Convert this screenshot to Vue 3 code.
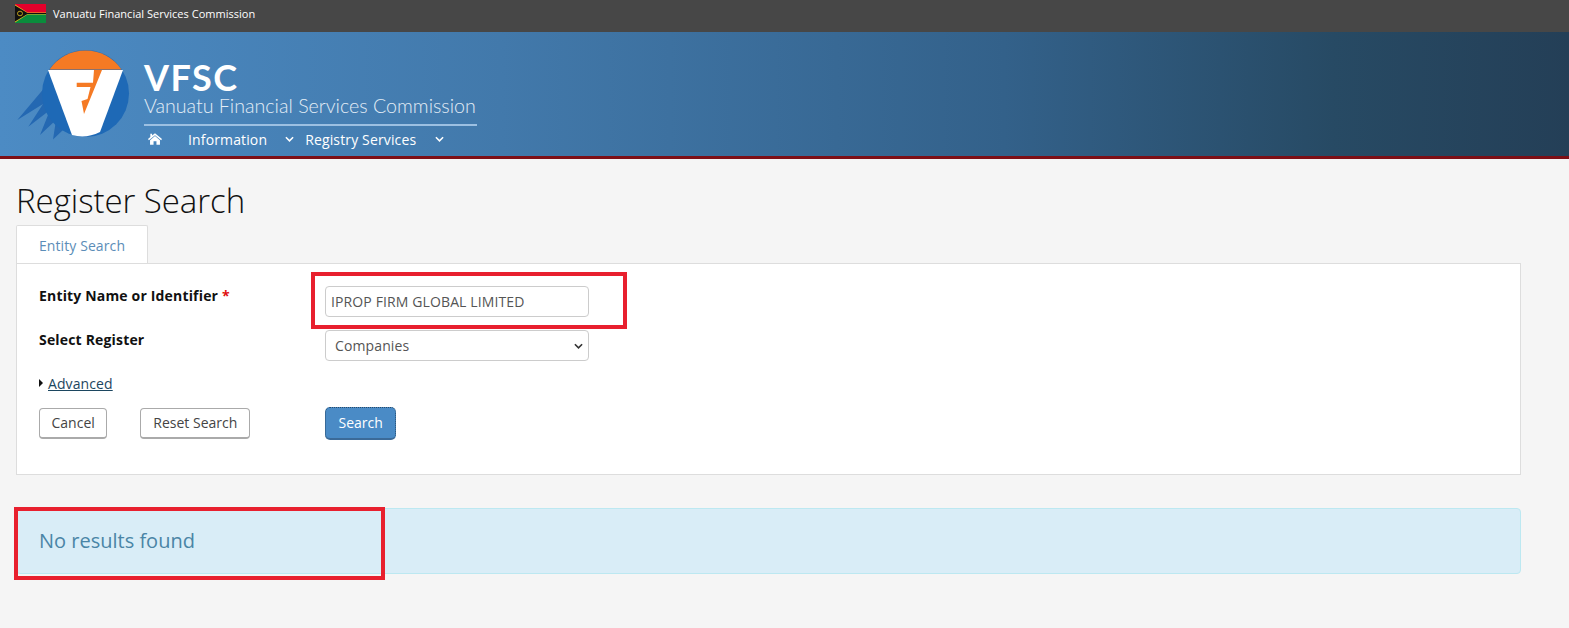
<script setup>
const navItems = ['Information', 'Registry Services']
</script>

<template>
  <div class="page">
    <div class="topbar">
      <svg class="flag" viewBox="0 0 31 19" width="31" height="19">
        <rect width="31" height="9.500" fill="#e4002b" />
        <rect y="9.500" width="31" height="9.500" fill="#0a8c3c" />
        <path d="M0 0.500 L12.500 8.500 H31 V10.500 H12.500 L0 18.500 Z" fill="#e8c020" />
        <path d="M0 1.500 L12.500 9 H31 V10 H12.500 L0 17.500 Z" fill="#111" />
        <ellipse cx="5" cy="9.500" rx="2.500" ry="2.300" fill="none" stroke="#e8c020" stroke-width="0.800" />
      </svg>
      <span class="toptext">Vanuatu Financial Services Commission</span>
    </div>

    <header class="banner">
      <svg class="logo" viewBox="17 50 120 100" width="120" height="100">
        <path d="M46 86 L17.300 120 L43 104 L28.300 126.700 L50 110 L40 135 L56 120 L53 139.500 L63 130 L72 130 L60 90 Z" fill="#2468b2" />
        <circle cx="85.500" cy="93.500" r="43.500" fill="#1e69b6" />
        <path d="M49.500 69.500 A43.500 43.500 0 0 1 121.500 69.500 Z" fill="#f57a24" />
        <path d="M48 70 H123 L100 132 Q86 139 72 135 Z" fill="#fff" />
        <path d="M94 70 H102 L84 114 L81.500 101 L87.500 99 L90.500 87 H76.700 V82.700 H93 Z" fill="#f57a24" />
      </svg>
      <div class="brand">
        <div class="wordmark">VFSC</div>
        <div class="fullname">Vanuatu Financial Services Commission</div>
        <nav class="nav">
          <svg class="home" viewBox="0 0 24 20" width="14" height="12">
            <path d="M12 0 L24 10 L22.500 12 L12 3.500 L1.500 12 L0 10 L4 6.700 V1 H7 V4.200 Z M12 5 L20.500 12 V20 H14.500 V14 H9.500 V20 H3.500 V12 Z" fill="#fff" />
          </svg>
          <a v-for="item in navItems" :key="item" class="navitem">
            <span>{{ item }}</span>
            <svg class="chev" viewBox="0 0 10 6" width="9" height="6">
              <path d="M1 1 L5 5 L9 1" fill="none" stroke="#fff" stroke-width="1.700" />
            </svg>
          </a>
        </nav>
      </div>
    </header>

    <main class="content">
      <h1 class="title">Register Search</h1>
      <div class="tabs">
        <div class="tab">Entity Search</div>
      </div>
      <section class="panel">
        <div class="row">
          <label class="lab">Entity Name or Identifier <span class="req">*</span></label>
          <div class="field mark-wrap">
            <input class="input" value="IPROP FIRM GLOBAL LIMITED" />
            <div class="mark mark-input"></div>
          </div>
        </div>
        <div class="row">
          <label class="lab">Select Register</label>
          <div class="field">
            <div class="input select">
              <span>Companies</span>
              <svg viewBox="0 0 10 6" width="9" height="6">
                <path d="M1 1 L5 5 L9 1" fill="none" stroke="#333" stroke-width="1.800" />
              </svg>
            </div>
          </div>
        </div>
        <div class="adv">
          <span class="tri"></span>
          <a class="advlink">Advanced</a>
        </div>
        <div class="actions">
          <div class="leftbtns">
            <button class="btn">Cancel</button>
            <button class="btn">Reset Search</button>
          </div>
          <button class="btn primary">Search</button>
        </div>
      </section>

      <div class="alert mark-wrap">
        No results found
        <div class="mark mark-alert"></div>
      </div>
    </main>
  </div>
</template>

<style>
html, body { margin: 0; background: #f5f5f5; }
</style>

<style scoped>
.page {
  width: 1569px;
  height: 628px;
  overflow: hidden;
  background: #f5f5f5;
  font-family: "Open Sans", sans-serif;
  font-size: 14px;
  color: #333;
}
.topbar {
  height: 32px;
  background: #474747;
  display: flex;
  align-items: center;
  padding-left: 15px;
  box-sizing: border-box;
  gap: 7px;
}
.flag { display: block; margin-top: -5px; }
.toptext { color: #fff; font-size: 11px; margin-top: -5px; letter-spacing: 0.020px; }
.banner {
  height: 127px;
  box-sizing: border-box;
  border-bottom: 3px solid #7d0f16;
  background: linear-gradient(90deg, #4c8bc4 0%, #4279ab 32%, #33618a 64%, #274a64 85%, #243f57 100%);
  display: flex;
  padding: 18px 0 0 17px;
}
.logo { display: block; flex: none; }
.brand { width: 333px; margin-left: 7px; color: #fff; }
.wordmark {
  font-family: "Lato", sans-serif;
  font-weight: 700;
  font-size: 36px;
  letter-spacing: 1.500px;
  line-height: 33px;
  margin-top: 11px;
}
.fullname {
  font-family: "Lato", sans-serif;
  font-size: 19.650px;
  font-weight: 300;
  line-height: 24px;
  white-space: nowrap;
  color: #e3edf6;
  border-bottom: 2px solid #9cc0e2;
  padding-bottom: 6px;
}
.nav { display: flex; align-items: center; height: 26px; padding-left: 4px; }
.home { margin-right: 26px; }
.navitem { display: flex; align-items: center; color: #fff; font-size: 14px; letter-spacing: 0.140px; white-space: nowrap; }
.navitem:first-of-type .chev { margin-left: 18px; margin-right: 11px; }
.navitem:last-of-type .chev { margin-left: 19px; }
.content { padding: 0 48px 0 16px; }
.title {
  margin: 0;
  font-size: 33px;
  font-weight: 300;
  color: #111;
  line-height: 45px;
  padding-top: 19px;
  letter-spacing: -0.050px;
}
.tabs { margin-top: 2px; height: 38px; position: relative; z-index: 1; }
.tab {
  width: 132px;
  height: 38px;
  box-sizing: border-box;
  background: #fff;
  border: 1px solid #ddd;
  border-bottom: none;
  border-radius: 2px 2px 0 0;
  color: #5b8db8;
  text-align: center;
  line-height: 40px;
  letter-spacing: 0.100px;
}
.panel {
  height: 212px;
  box-sizing: border-box;
  background: #fff;
  border: 1px solid #ddd;
  padding: 22px 22px 0;
}
.row { display: flex; height: 44px; }
.lab { width: 286px; font-weight: 700; color: #111; line-height: 20px; letter-spacing: 0.170px; white-space: nowrap; }
.req { color: #e01010; }
.field { width: 264px; position: relative; }
.input {
  width: 264px;
  height: 31px;
  box-sizing: border-box;
  border: 1px solid #ccc;
  border-radius: 4px;
  background: #fff;
  padding: 0 5px;
  font: 14px "Open Sans", sans-serif;
  letter-spacing: 0.120px;
  color: #555;
  outline: none;
  display: block;
}
.select {
  display: flex;
  align-items: center;
  justify-content: space-between;
  padding: 0 5px 0 9px;
}
.adv { display: flex; align-items: center; height: 20px; gap: 5px; margin-top: -1px; }
.tri {
  width: 0;
  height: 0;
  border-left: 4px solid #111;
  border-top: 4px solid transparent;
  border-bottom: 4px solid transparent;
}
.advlink { color: #1c4660; text-decoration: underline; letter-spacing: 0.100px; }
.actions { display: flex; margin-top: 15px; align-items: flex-start; }
.leftbtns { width: 286px; display: flex; gap: 33px; }
.btn {
  height: 31px;
  box-sizing: border-box;
  padding: 0 12px 2px;
  border: 1px solid #aaa;
  border-bottom-width: 2px;
  border-radius: 4px;
  background: #fff;
  font: 14px "Open Sans", sans-serif;
  color: #444;
}
.leftbtns .btn:first-child { padding: 0 11.500px 2px; }
.primary {
  height: 33px;
  margin-top: -1px;
  padding: 0 12.500px 2px;
  background: #4a8bc6;
  color: #fff;
  border: 1px dotted #274a6a;
  border-bottom: 2px solid #3b6a98;
  border-radius: 5px;
}
.alert {
  margin-top: 33px;
  height: 66px;
  box-sizing: border-box;
  background: #d9edf7;
  border: 1px solid #bce8f1;
  border-radius: 4px;
  color: #4a85a6;
  font-size: 20px;
  line-height: 64px;
  padding-left: 22px;
}
.mark-wrap { position: relative; }
.mark {
  position: absolute;
  box-sizing: border-box;
  border: 4px solid #e8202e;
  pointer-events: none;
}
.mark-input { left: -14px; top: -14px; width: 316px; height: 57px; }
.mark-alert { left: -3px; top: -2px; width: 371px; height: 73px; }
</style>
